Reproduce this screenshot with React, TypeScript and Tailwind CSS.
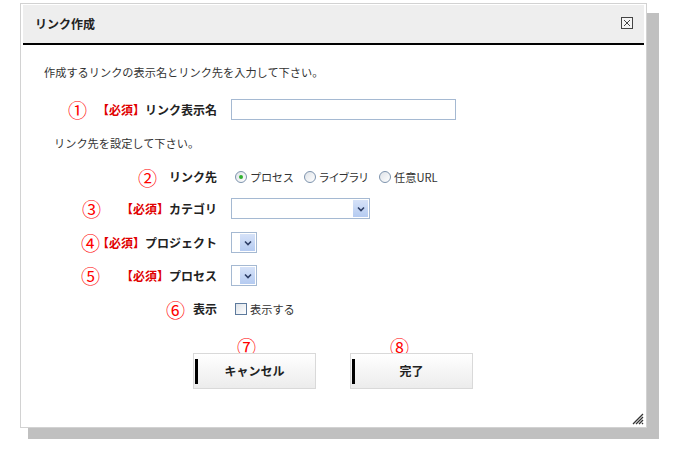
import React from "react";

function Req() {
  return <span className="text-[#e00000]">【必須】</span>;
}

function Circ({ c, ml }: { c: string; ml: string }) {
  return (
    <span className={`${ml} shrink-0 w-[19px] text-[#ff0000] text-[19px] leading-none font-normal`}>{c}</span>
  );
}

function Label({ children, extra = "" }: { children: React.ReactNode; extra?: string }) {
  return (
    <>
      <span className="flex-1 min-w-0" />
      <span className={`${extra} shrink-0 whitespace-nowrap text-[12px] font-bold text-[#222]`}>{children}</span>
    </>
  );
}

function Radio({ checked }: { checked?: boolean }) {
  return (
    <span className="w-[12px] h-[12px] rounded-full border border-[#7d93ad] bg-gradient-to-br from-[#dfe3e8] to-white flex items-center justify-center">
      {checked && <span className="w-[4px] h-[4px] rounded-full bg-[#2fb02f]" />}
    </span>
  );
}

function Chevron() {
  return (
    <svg width="8" height="6" viewBox="0 0 8 6">
      <path d="M1 1.5 L4 4.5 L7 1.5" stroke="#2d3e66" strokeWidth="1.6" fill="none" />
    </svg>
  );
}

function SelectBox({ w }: { w: string }) {
  return (
    <div className={`${w} h-[21px] border border-[#a5b9d2] bg-white flex justify-end items-stretch p-[1px]`}>
      <div className="w-[15px] bg-gradient-to-b from-[#d6e2f8] to-[#b5cbf1] flex items-center justify-center">
        <Chevron />
      </div>
    </div>
  );
}

function Btn({ label, ml }: { label: string; ml: string }) {
  return (
    <div className={`${ml} relative w-[123px] h-[36px] border border-[#d9d9d9] bg-gradient-to-b from-white to-[#ececec] flex items-center justify-center text-[12px] font-bold text-[#222]`}>
      <span className="absolute left-[1px] top-[5px] bottom-[4px] w-[3px] bg-black" />
      {label}
    </div>
  );
}

export default function App() {
  return (
    <div className="relative w-[696px] h-[454px] bg-white overflow-hidden font-[family-name:'Noto_Sans_CJK_JP',sans-serif] text-[#333]">
      <div className="absolute left-[28px] top-[13px] w-[631px] h-[426px] bg-[#c0c0c0]" />
      <div className="absolute left-[20px] top-[3px] w-[627px] h-[425px] bg-white border border-[#d2d2d2] flex flex-col">
        <div className="mx-[2px] mt-[1px] h-[40px] bg-[#eeeeee] border-b-2 border-black flex items-center justify-between pl-[12px] pr-[11px]">
          <span className="text-[12px] font-bold text-[#222]">リンク作成</span>
          <svg width="12" height="12" viewBox="0 0 12 12" className="mt-[-2px]">
            <rect x="0.5" y="0.5" width="11" height="11" fill="#f4f4f4" stroke="#444" />
            <path d="M3 3 L9 9 M9 3 L3 9" stroke="#444" strokeWidth="1" />
          </svg>
        </div>

        <div className="flex flex-col pt-[17px] text-[11.2px]">
          <div className="h-[20px] flex items-center pl-[23px]">
            作成するリンクの表示名とリンク先を入力して下さい。
          </div>

          <div className="mt-[15px] h-[25px] flex items-center">
            <div className="w-[196px] flex items-center">
              <Circ c="①" ml="ml-[47px]" />
              <Label><Req />リンク表示名</Label>
            </div>
            <div className="ml-[14px] w-[225px] h-[21px] border border-[#a5b9d2] bg-white" />
          </div>

          <div className="mt-[11px] h-[20px] flex items-center pl-[33px]">リンク先を設定して下さい。</div>

          <div className="mt-[12px] h-[24px] flex items-center">
            <div className="w-[196px] flex items-center">
              <Circ c="②" ml="ml-[117px]" />
              <Label>リンク先</Label>
            </div>
            <div className="ml-[18px] flex items-center">
              <Radio checked />
              <span className="ml-[3px] tracking-[-0.3px]">プロセス</span>
              <span className="ml-[10px]"><Radio /></span>
              <span className="ml-[3px] tracking-[-1.3px]">ライブラリ</span>
              <span className="ml-[11px]"><Radio /></span>
              <span className="ml-[3px]">任意URL</span>
            </div>
          </div>

          <div className="mt-[7px] h-[25px] flex items-center">
            <div className="w-[196px] flex items-center">
              <Circ c="③" ml="ml-[61px]" />
              <Label><Req />カテゴリ</Label>
            </div>
            <div className="ml-[14px]">
              <SelectBox w="w-[139px]" />
            </div>
          </div>

          <div className="mt-[9px] h-[25px] flex items-center">
            <div className="w-[196px] flex items-center">
              <Circ c="④" ml="ml-[60px]" />
              <Label extra="ml-[-6px]"><Req />プロジェクト</Label>
            </div>
            <div className="ml-[14px]">
              <SelectBox w="w-[26px]" />
            </div>
          </div>

          <div className="mt-[8px] h-[25px] flex items-center">
            <div className="w-[196px] flex items-center">
              <Circ c="⑤" ml="ml-[60px]" />
              <Label><Req />プロセス</Label>
            </div>
            <div className="ml-[14px]">
              <SelectBox w="w-[26px]" />
            </div>
          </div>

          <div className="mt-[9px] h-[24px] flex items-center">
            <div className="w-[196px] flex items-center">
              <Circ c="⑥" ml="ml-[145px]" />
              <Label>表示</Label>
            </div>
            <div className="ml-[18px] flex items-center">
              <span className="w-[12px] h-[12px] border border-[#5d7a9c] bg-gradient-to-br from-[#dde2e8] to-white" />
              <span className="ml-[3px]">表示する</span>
            </div>
          </div>

          <div className="mt-[18px] h-[14px] flex items-center">
            <span className="ml-[216px] w-[19px] text-[#ff0000] text-[19px] leading-none">⑦</span>
            <span className="ml-[134px] w-[19px] text-[#ff0000] text-[19px] leading-none">⑧</span>
          </div>

          <div className="flex items-center">
            <Btn label="キャンセル" ml="ml-[172px]" />
            <Btn label="完了" ml="ml-[34px]" />
          </div>
        </div>

        <svg width="12" height="12" viewBox="0 0 12 12" className="absolute left-[611px] top-[409px]">
          <path d="M1 11 L11 1 M4 11 L11 4 M7 11 L11 7 M10 11 L11 10" stroke="#333" strokeWidth="1.3" />
        </svg>
      </div>
    </div>
  );
}
